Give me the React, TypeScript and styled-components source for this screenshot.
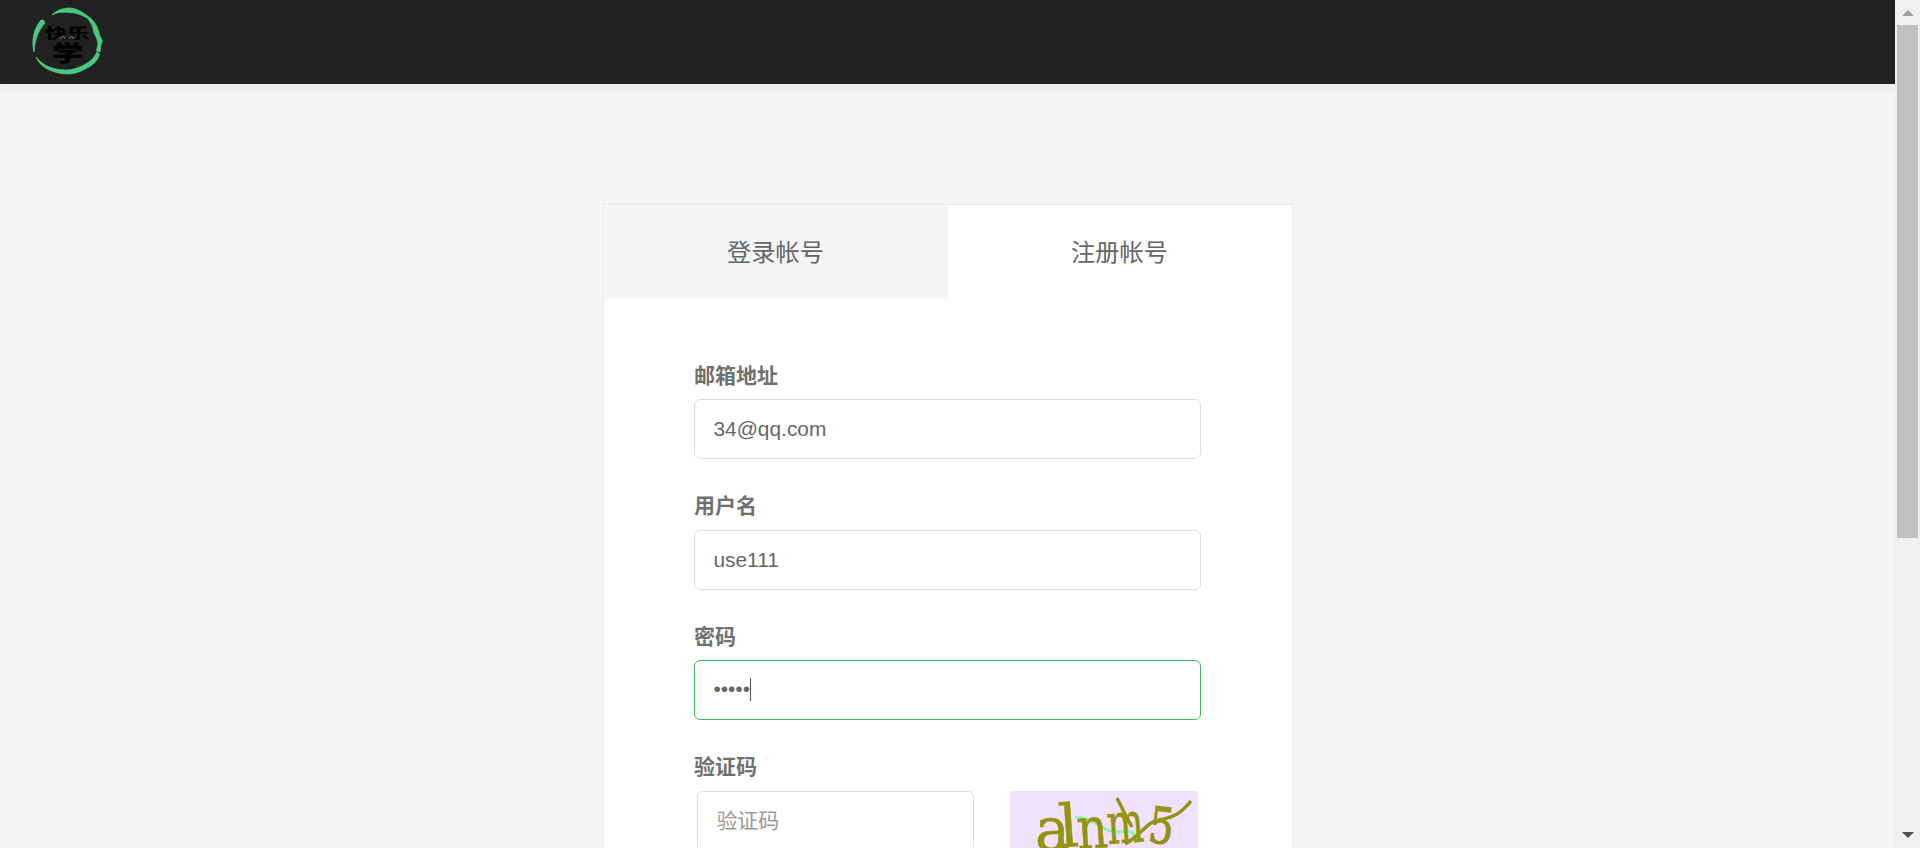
import React from "react";
import styled, { createGlobalStyle, css } from "styled-components";

const GlobalStyle = createGlobalStyle`
  * { box-sizing: border-box; }
  body {
    margin: 0;
    overflow: hidden;
    background: #f5f5f5;
    font-family: "Liberation Sans", "Noto Sans CJK SC", sans-serif;
    color: #666;
  }
`;

const Screen = styled.div`
  display: flex;
  height: 848px;
  overflow: hidden;
`;

const Page = styled.div`
  flex: 1;
  height: 100%;
  overflow: hidden;
`;

const Header = styled.header`
  height: 84px;
  padding: 5px 0 0 30px;
  background: #212121;
  box-shadow: 0 2px 12px rgba(0, 0, 0, 0.08);
`;

const Logo = styled.svg`
  display: block;
  font-family: "Noto Sans CJK SC", sans-serif;
  font-weight: 700;
`;

const Card = styled.main`
  width: 690px;
  height: 900px;
  margin: 120px auto 0 603px;
  border: 1px solid #e2e9f0;
  background: #fff;
`;

const Tabs = styled.nav`
  display: flex;
  padding-top: 1px;
`;

const Tab = styled.div<{ $active?: boolean }>`
  flex: 1;
  height: 93px;
  padding-right: 1px;
  line-height: 93px;
  text-align: center;
  font-size: 24.2px;
  background: ${(p) => (p.$active ? "#fff" : "#f5f5f5")};
`;

const Form = styled.form`
  padding: 57.9px 91px 0 90px;
`;

const Field = styled.div`
  height: 130.5px;
`;

const Label = styled.label`
  display: block;
  height: 42.15px;
  line-height: 38px;
  font-size: 21px;
  font-weight: 700;
  color: #707070;
`;

const box = css`
  height: 60px;
  padding: 0 18.4px;
  border: 1px solid #ddd;
  border-radius: 6px;
  background: #fff;
  font-family: inherit;
  font-size: 20.9px;
  color: #666;
`;

const Input = styled.input`
  ${box}
  display: block;
  width: 100%;
  outline: none;
  &::placeholder { color: #999; opacity: 1; }
`;

const FocusedInput = styled.div`
  ${box}
  display: flex;
  align-items: center;
  padding-bottom: 2px;
  border-color: #41ba5f;
`;

const Caret = styled.span`
  width: 1px;
  height: 23px;
  background: #555;
`;

const CaptchaRow = styled.div`
  display: flex;
  gap: 36px;
  padding-left: 3px;
`;

const CaptchaInput = styled(Input)`
  width: 277px;
`;

const CaptchaImage = styled.svg`
  display: block;
  font-family: "DejaVu Serif", serif;
`;

const Scrollbar = styled.aside`
  display: flex;
  flex-direction: column;
  align-items: center;
  justify-content: space-between;
  width: 25px;
  height: 100%;
  padding: 10px 2px 10px 2px;
  background: #f0f0f0;
`;

const Thumb = styled.div`
  width: 21px;
  height: 513px;
  margin: 9px 0 auto;
  background: #c1c1c1;
`;

function LogoMark() {
  return (
    <Logo width="76" height="72" viewBox="30 5 76 72">
      <g fill="#48c97f" stroke="#48c97f" strokeWidth=".7" strokeLinejoin="round">
        <path d="M52 15C57 10 63 8 69 8C76 8 83 12 89 17C94 20 98 27 100 36L102.500 41L101 45L100 52L96.500 51L98 43L96.500 38L94 33C93 27 91 22 87 18C82 15 76 12.500 69 12.500C62 12 58 12 52 15Z" />
        <path d="M41 20Q44 19 45 23C38 31 35 40 34 52C31 40 34 28 41 20Z" />
        <path d="M36 57L40 61C46 67 56 70 67 70C76 70 90 63 94 57L97 52L99.500 54C98 60 94 64 89 67C82 71 76 74 68 74C58 74 41 70 36 57Z" />
      </g>
      <g stroke="#000" strokeWidth=".2">
        <text fontSize="22" transform="translate(45 38) scale(1 .61)">快乐</text>
        <text fontSize="31" strokeWidth=".8" transform="translate(52 61) scale(1 .7)">学</text>
      </g>
      <path d="M60.5 39v-1q2-2.500 4 0v1M69.5 39v-1q2-2.500 4 0v1" fill="none" stroke="#38a66b" strokeWidth="1.2" />
    </Logo>
  );
}

function Captcha() {
  return (
    <CaptchaImage width="188" height="60" viewBox="0 0 188 60">
      <rect width="188" height="60" fill="#f1e0fe" />
      <path d="M65 26Q76 26 90 35T115 40Q126 40 123 47" fill="none" stroke="#92f5ac" strokeWidth="3" />
      <g fill="#929410" stroke="#929410" strokeWidth=".5">
        <text x="25" y="59" fontSize="59" textLength="35" lengthAdjust="spacingAndGlyphs">a</text>
        <text x="50" y="56" fontSize="59" textLength="20" lengthAdjust="spacingAndGlyphs" transform="rotate(-4 52 55)">l</text>
        <text x="68" y="58" fontSize="58" textLength="31" lengthAdjust="spacingAndGlyphs" transform="rotate(-4 70 57)">n</text>
        <text x="98" y="53" fontSize="57" textLength="37" lengthAdjust="spacingAndGlyphs" transform="rotate(-4 99 52)">m</text>
        <text x="137" y="51" fontSize="50" textLength="25" lengthAdjust="spacingAndGlyphs" strokeWidth="1.2" transform="rotate(7 139 50)">5</text>
      </g>
      <path d="M107 7L116 25L122 36M115 53C132 44 136 31 149 29C165 26 171 22 181 10" fill="none" stroke="#929410" strokeWidth="3.5" />
    </CaptchaImage>
  );
}

export default function App() {
  return (
    <>
      <GlobalStyle />
      <Screen>
        <Page>
          <Header><LogoMark /></Header>
          <Card>
            <Tabs>
              <Tab>登录帐号</Tab>
              <Tab $active>注册帐号</Tab>
            </Tabs>
            <Form>
              <Field>
                <Label>邮箱地址</Label>
                <Input defaultValue="34@qq.com" />
              </Field>
              <Field>
                <Label>用户名</Label>
                <Input defaultValue="use111" />
              </Field>
              <Field>
                <Label>密码</Label>
                <FocusedInput>•••••<Caret /></FocusedInput>
              </Field>
              <Field>
                <Label>验证码</Label>
                <CaptchaRow>
                  <CaptchaInput placeholder="验证码" />
                  <Captcha />
                </CaptchaRow>
              </Field>
            </Form>
          </Card>
        </Page>
        <Scrollbar>
          <svg width="12" height="6" viewBox="0 0 12 6"><path d="M6 0L12 6H0Z" fill="#a0a0a0" /></svg>
          <Thumb />
          <svg width="12" height="6" viewBox="0 0 12 6"><path d="M0 0H12L6 6Z" fill="#4c4c4c" /></svg>
        </Scrollbar>
      </Screen>
    </>
  );
}
